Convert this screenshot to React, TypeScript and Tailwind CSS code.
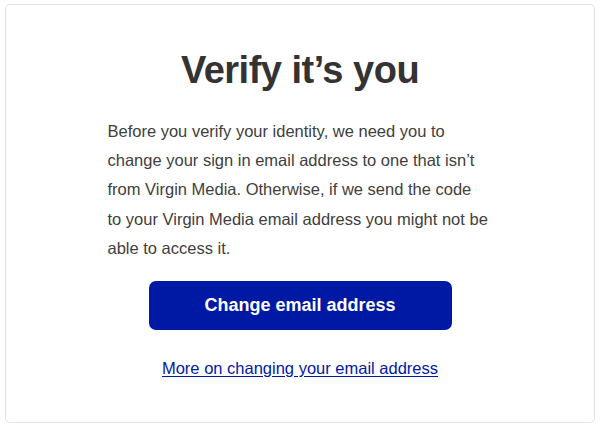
export default function App() {
  return (
    <div className="min-h-screen bg-white p-[5px] pt-[4px] font-['Liberation_Sans',Arial,sans-serif]">
      <div className="h-[419px] rounded-[5px] border border-[#e3e3e3] bg-white flex flex-col items-center pt-[39px]">
        <h1 className="text-[38px] font-bold leading-[52px] tracking-[-0.5px] text-[#333333]">Verify it’s you</h1>
        <p className="mt-[21px] w-[385px] text-[16.5px] leading-[29.2px] text-[#404040]">
          Before you verify your identity, we need you to<br />
          change your sign in email address to one that isn’t<br />
          from Virgin Media. Otherwise, if we send the code<br />
          to your Virgin Media email address you might not be<br />
          able to access it.
        </p>
        <button className="mt-[18px] h-[49px] w-[303px] rounded-[7px] bg-[#0019a5] text-[18px] font-bold text-white">
          Change email address
        </button>
        <a href="#" className="mt-[26px] text-[16.5px] leading-[24px] text-[#0019a5] underline underline-offset-[2px]">
          More on changing your email address
        </a>
      </div>
    </div>
  );
}
